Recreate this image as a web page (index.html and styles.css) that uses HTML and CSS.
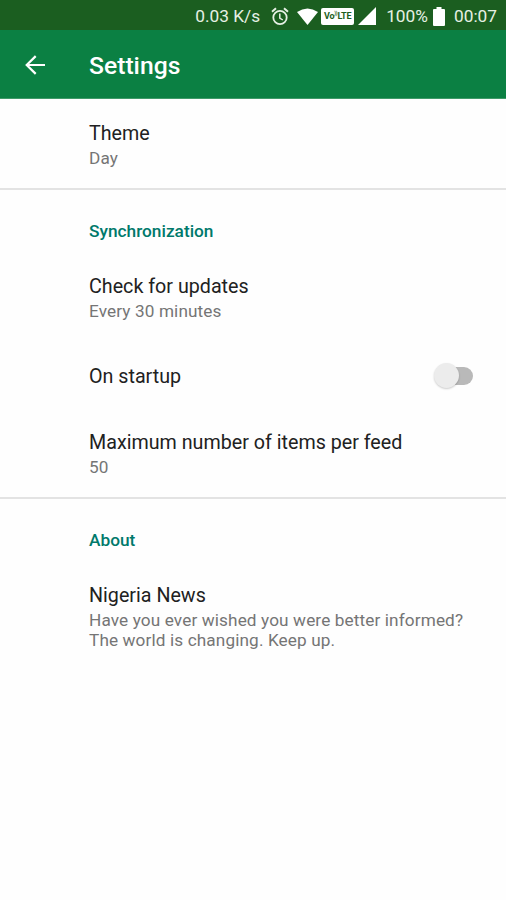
FILE: index.html
```html
<!DOCTYPE html>
<html lang="en">
<head>
<meta charset="utf-8">
<title>Settings</title>
<link rel="stylesheet" href="styles.css">
</head>
<body>
<div class="status">
  <span class="speed">0.03 K/s</span>
  <svg class="alarm" width="18" height="19" viewBox="0 0 18 19" fill="none" stroke="#e6f0e4"><circle cx="9" cy="10.5" r="6.7" stroke-width="1.8"/><path d="M1 4.7 5 1.3M17 4.7l-4-3.4" stroke-width="2"/><path d="M8.8 6.5v4.5l3 2" stroke-width="1.5"/></svg>
  <svg class="wifi" width="21" height="17" viewBox="0 0 21 17"><path d="M0 4Q10.500-3 21 4L10.500 17Z" fill="#fff"/></svg>
  <span class="volte">Vo<sup>))</sup>LTE</span>
  <svg class="signal" width="18" height="18" viewBox="0 0 18 18"><path d="M18 0v18H0Z" fill="#fff"/></svg>
  <span class="percent">100%</span>
  <svg class="battery" width="12" height="19" viewBox="0 0 12 19"><path d="M3.500 0h5v2H11q1 0 1 1v15q0 1-1 1H1q-1 0-1-1V3q0-1 1-1h2.500Z" fill="#fff"/></svg>
  <span class="clock">00:07</span>
</div>
<header class="toolbar">
  <svg class="back" width="20" height="20" viewBox="0 0 20 20" fill="none" stroke="#fff" stroke-width="2.200"><path d="M20 10H2M10.700 1.100 1.700 10l9 8.900"/></svg>
  <h1>Settings</h1>
</header>
<main>
  <section class="group general">
    <div class="item"><div class="title">Theme</div><div class="summary">Day</div></div>
  </section>
  <section class="group sync">
    <h2>Synchronization</h2>
    <div class="item"><div class="title">Check for updates</div><div class="summary">Every 30 minutes</div></div>
    <div class="item row"><div class="title">On startup</div><div class="switch"><div class="thumb"></div></div></div>
    <div class="item"><div class="title">Maximum number of items per feed</div><div class="summary">50</div></div>
  </section>
  <section class="group about">
    <h2>About</h2>
    <div class="item"><div class="title">Nigeria News</div><div class="summary">Have you ever wished you were better informed?<br>The world is changing. Keep up.</div></div>
  </section>
</main>
</body>
</html>
```
FILE: styles.css
```css
* { box-sizing: border-box; }
body {
  margin: 0;
  min-height: 900px;
  background: #fefefe;
  font-family: Roboto, sans-serif;
  color: #212121;
}
.status {
  display: flex;
  align-items: center;
  height: 30px;
  padding: 2px 9px 0 0;
  justify-content: flex-end;
  background: #1b5e20;
  color: #e6f0e4;
  font-size: 17.3px;
  line-height: 28px;
  white-space: nowrap;
}
.alarm { margin-left: 11px; }
.wifi { margin-left: 8px; }
.volte {
  width: 33px;
  height: 17px;
  margin-left: 3px;
  border-radius: 2px;
  background: #fff;
  color: #1b5e20;
  font-size: 9px;
  font-weight: 700;
  line-height: 17px;
  text-align: center;
  letter-spacing: -0.2px;
}
.volte sup { font-size: 5px; line-height: 0; }
.signal { margin-left: 4px; }
.percent { margin-left: 10px; }
.battery { margin-left: 5px; }
.clock { margin-left: 9px; }
.toolbar {
  display: flex;
  align-items: center;
  height: 69px;
  padding: 1px 25px 0;
  background: #0b8043;
  border-bottom: 1px solid #3f9a68;
  color: #fff;
}
h1 {
  margin: 2px 0 0 44px;
  font-size: 24.7px;
  font-weight: 500;
  line-height: 30px;
}
.group { padding-left: 89px; }
.group + .group { border-top: 2px solid #e3e3e3; }
.general { height: 89px; padding-top: 23px; }
.sync { height: 309px; padding-top: 30px; }
.about { padding-top: 30px; }
h2 {
  margin: 0 0 33px;
  color: #00796b;
  font-size: 17.3px;
  font-weight: 500;
  line-height: 22px;
}
.title { font-size: 19.7px; line-height: 24px; }
.summary {
  margin-top: 2px;
  color: #757575;
  font-size: 17.2px;
  letter-spacing: 0.12px;
  line-height: 20px;
}
.row {
  display: flex;
  justify-content: space-between;
  align-items: center;
  height: 24px;
  margin: 44px 33px 42px 0;
}
.switch {
  display: flex;
  align-items: center;
  width: 37px;
  height: 18px;
  margin-bottom: 3px;
  border-radius: 9px;
  background: #b9b9b9;
}
.thumb {
  flex: none;
  width: 25px;
  height: 25px;
  margin-left: -2px;
  border-radius: 50%;
  background: #ececec;
  box-shadow: 0 1px 2px #0003;
}
```
